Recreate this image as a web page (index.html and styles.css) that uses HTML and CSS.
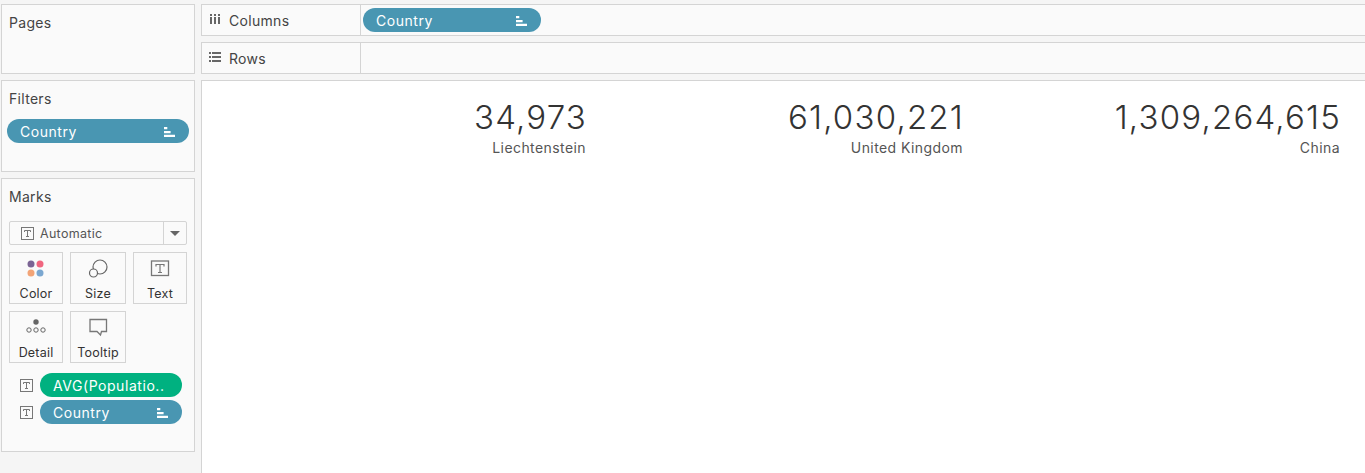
FILE: index.html
```html
<!DOCTYPE html>
<html lang="en">
<head>
    <meta charset="UTF-8">
    <title>Population by Country</title>
    <link rel="stylesheet" href="styles.css">
</head>
<body>

<svg class="sprites" width="0" height="0">
    <symbol id="sort" viewBox="0 0 10 10">
        <path d="M0 1h3v2H0zM0 4.500h6v2H0zM0 8h10v2H0z" fill="currentColor"/>
    </symbol>
    <symbol id="textBox" viewBox="0 0 13 13">
        <rect x="0.500" y="0.500" width="12" height="12" fill="none" stroke="#777"/>
        <path d="M3.500 5V3.500h6V5M6.500 3.500v6M5 9.500h3" fill="none" stroke="#777"/>
    </symbol>
</svg>

<div class="sidebar">
    <div class="card pages">
        <div class="cardTitle">Pages</div>
    </div>

    <div class="card filters">
        <div class="cardTitle">Filters</div>
        <div class="pill blue filterPill">Country <svg class="sortIcon"><use href="#sort"/></svg></div>
    </div>

    <div class="card marks">
        <div class="cardTitle">Marks</div>

        <div class="markType">
            <svg class="typeIcon"><use href="#textBox"/></svg>
            <span class="markLabel">Automatic</span>
            <span class="markArrow"></span>
        </div>

        <div class="markButtons">
            <div class="markBtn">
                <svg class="markIcon" viewBox="0 0 24 24">
                    <circle cx="7" cy="6" r="3.500" fill="#7b6494"/>
                    <circle cx="16" cy="6" r="3.500" fill="#f0667f"/>
                    <circle cx="7" cy="15" r="3.500" fill="#f2a477"/>
                    <circle cx="16" cy="15" r="3.500" fill="#7ba7d0"/>
                </svg>
                <span>Color</span>
            </div>
            <div class="markBtn">
                <svg class="markIcon" viewBox="0 0 24 24">
                    <circle cx="14" cy="9" r="7" fill="none" stroke="#666" stroke-width="1.200"/>
                    <circle cx="7.500" cy="15" r="4" fill="#fafafa" stroke="#666" stroke-width="1.200"/>
                </svg>
                <span>Size</span>
            </div>
            <div class="markBtn">
                <svg class="markIcon" viewBox="0 0 24 24">
                    <rect x="3.500" y="3" width="17" height="14.500" fill="none" stroke="#777" stroke-width="1.300"/>
                    <path d="M8 8.500V6.500h8v2M12 6.500v8M10 14.500h4" fill="none" stroke="#777" stroke-width="1.200"/>
                </svg>
                <span>Text</span>
            </div>
            <div class="markBtn">
                <svg class="markIcon" viewBox="0 0 24 24">
                    <circle cx="12" cy="5" r="2.700" fill="#666"/>
                    <circle cx="5" cy="13" r="2.200" fill="none" stroke="#666"/>
                    <circle cx="12" cy="13" r="2.200" fill="none" stroke="#666"/>
                    <circle cx="19" cy="13" r="2.200" fill="none" stroke="#666"/>
                </svg>
                <span>Detail</span>
            </div>
            <div class="markBtn">
                <svg class="markIcon" viewBox="0 0 24 24">
                    <path d="M4 2.500h16.500v12h-5l-1 3.500-3.500-3.500H4z" fill="none" stroke="#777" stroke-width="1.300"/>
                </svg>
                <span>Tooltip</span>
            </div>
        </div>

        <div class="markRow">
            <svg class="typeIcon"><use href="#textBox"/></svg>
            <div class="pill green markPill">AVG(Populatio..</div>
        </div>
        <div class="markRow">
            <svg class="typeIcon"><use href="#textBox"/></svg>
            <div class="pill blue markPill">Country <svg class="sortIcon"><use href="#sort"/></svg></div>
        </div>
    </div>
</div>

<div class="main">
    <div class="shelf">
        <div class="shelfLabel">
            <svg class="shelfIcon" viewBox="0 0 12 12">
                <path d="M1 1h2v2H1zM1 4h2v7H1zM5 1h2v2H5zM5 4h2v7H5zM9 1h2v2H9zM9 4h2v7H9z" fill="#666"/>
            </svg>
            Columns
        </div>
        <div class="shelfBody">
            <div class="pill blue shelfPill">Country <svg class="sortIcon"><use href="#sort"/></svg></div>
        </div>
    </div>

    <div class="shelf">
        <div class="shelfLabel">
            <svg class="shelfIcon" viewBox="0 0 12 12">
                <path d="M0 1h2v2H0zM3 1h9v2H3zM0 5h2v2H0zM3 5h9v2H3zM0 9h2v2H0zM3 9h9v2H3z" fill="#666"/>
            </svg>
            Rows
        </div>
        <div class="shelfBody"></div>
    </div>

    <div class="view">
        <div class="cell">
            <div class="value">34,973</div>
            <div class="name">Liechtenstein</div>
        </div>
        <div class="cell">
            <div class="value">61,030,221</div>
            <div class="name">United Kingdom</div>
        </div>
        <div class="cell">
            <div class="value">1,309,264,615</div>
            <div class="name">China</div>
        </div>
    </div>
</div>

</body>
</html>
```
FILE: styles.css
```css
/* Basic page frame */
html, body {
    height: 100%;
}

body {
    display: flex;
    gap: 6px;
    margin: 0;
    padding: 4px 0 0 1px;
    box-sizing: border-box;
    height: 473px;
    overflow: hidden;
    background: #f5f5f5;
    font-family: Inter, Arial, sans-serif;
    font-size: 14px;
    letter-spacing: 0.3px;
    color: #333;
}

.sprites {
    display: none;
}

/* Left column */
.sidebar {
    display: flex;
    flex-direction: column;
    flex: none;
    gap: 6px;
    width: 194px;
}

.card {
    box-sizing: border-box;
    background: #fafafa;
    border: 1px solid #d4d4d4;
    padding: 0 5px;
}

.pages {
    height: 70px;
}

.filters {
    height: 92px;
}

.marks {
    height: 274px;
}

.cardTitle {
    padding: 8px 2px 0;
    height: 20px;
    line-height: 20px;
    color: #444;
}

/* Pills */
.pill {
    display: flex;
    align-items: center;
    justify-content: space-between;
    box-sizing: border-box;
    height: 24px;
    border-radius: 12px;
    padding: 0 14px 0 13px;
    color: #fff;
    font-size: 14px;
    letter-spacing: 0.55px;
    white-space: nowrap;
}

.blue {
    background: #4996b2;
}

.green {
    background: #00b180;
}

.sortIcon {
    width: 11px;
    height: 11px;
    color: #fff;
}

.filterPill {
    margin-top: 10px;
    width: 182px;
}

.shelfPill {
    width: 178px;
}

.markPill {
    width: 142px;
}

/* Marks card */
.markType {
    display: flex;
    align-items: center;
    box-sizing: border-box;
    height: 24px;
    margin: 14px 2px 0 2px;
    padding-left: 11px;
    background: #fafafa;
    border: 1px solid #d4d4d4;
    border-radius: 2px;
}

.typeIcon {
    flex: none;
    width: 13px;
    height: 13px;
}

.markLabel {
    flex: 1;
    margin-left: 6px;
    font-size: 12.500px;
    color: #555;
}

.markArrow {
    display: flex;
    align-items: center;
    justify-content: center;
    width: 22px;
    height: 100%;
    border-left: 1px solid #d4d4d4;
}

.markArrow::after {
    content: "";
    border: 5px solid transparent;
    border-top: 5px solid #666;
    border-bottom: 0;
}

.markButtons {
    display: grid;
    grid-template-columns: 54px 56px 54px;
    gap: 7px;
    margin: 7px 0 0 2px;
}

.markBtn {
    display: flex;
    flex-direction: column;
    align-items: center;
    box-sizing: border-box;
    height: 52px;
    background: #fafafa;
    border: 1px solid #d4d4d4;
    font-size: 12.500px;
    letter-spacing: 0.2px;
    color: #333;
    line-height: 18px;
}

.markIcon {
    width: 24px;
    height: 24px;
    margin: 5px 0 3px;
}

.markRow {
    display: flex;
    align-items: center;
    gap: 7px;
    margin-left: 13px;
    margin-top: 3px;
}

.markButtons + .markRow {
    margin-top: 10px;
}

/* Shelves and view */
.main {
    display: flex;
    flex-direction: column;
    flex: 1;
    gap: 6px;
    min-width: 0;
    margin-right: -5px;
}

.shelf {
    display: flex;
    flex: none;
    box-sizing: border-box;
    height: 32px;
    background: #fafafa;
    border: 1px solid #d4d4d4;
}

.shelfLabel {
    display: flex;
    align-items: center;
    gap: 8px;
    flex: none;
    box-sizing: border-box;
    width: 159px;
    padding-left: 7px;
    border-right: 1px solid #d4d4d4;
    color: #444;
}

.shelfIcon {
    width: 12px;
    height: 12px;
    margin-bottom: 3px;
}

.shelfBody {
    display: flex;
    align-items: center;
    flex: 1;
    padding-left: 2px;
}

.view {
    display: grid;
    grid-template-columns: repeat(3, 377px);
    align-content: start;
    flex: 1;
    padding: 15px 0 0 7px;
    background: #fff;
    border-left: 1px solid #d4d4d4;
    border-top: 1px solid #d4d4d4;
}

.cell {
    text-align: right;
}

.value {
    margin-right: -1px;
    font-size: 33px;
    font-weight: 300;
    letter-spacing: 1.200px;
    line-height: 42px;
    color: #333;
}

.name {
    font-size: 14px;
    letter-spacing: 0.420px;
    line-height: 20px;
    color: #555;
}
```
